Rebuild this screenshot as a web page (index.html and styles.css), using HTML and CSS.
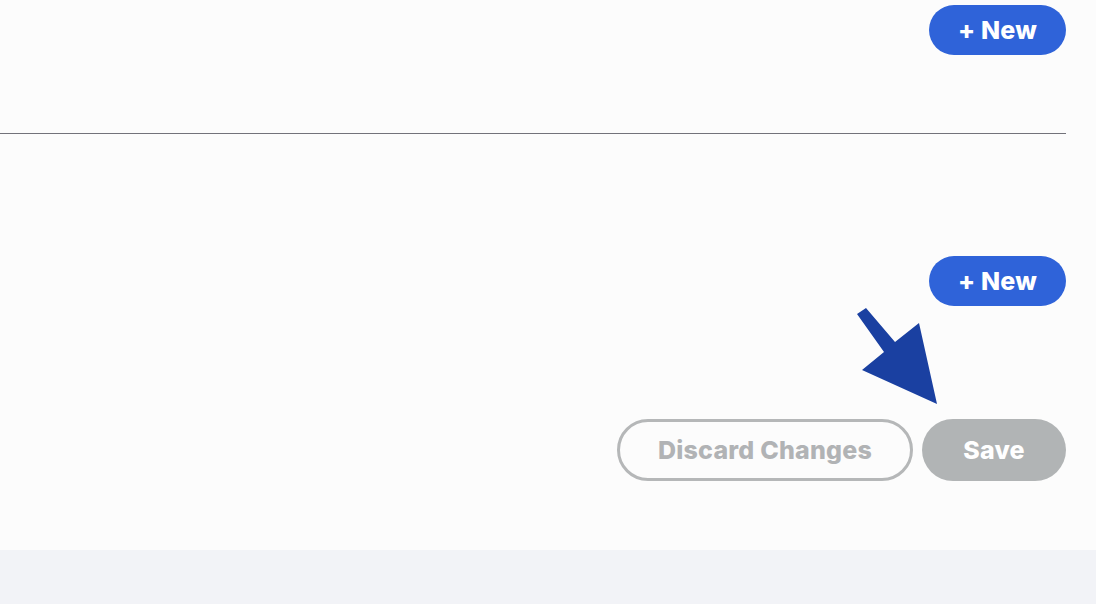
FILE: index.html
```html
<!DOCTYPE html>
<html>
<head>
<meta charset="utf-8">
<link rel="stylesheet" href="styles.css">
</head>
<body>
<div class="page">
  <main class="main">
    <section class="section section-top">
      <button class="btn btn-new">+ New</button>
    </section>
    <hr class="divider">
    <section class="section section-second">
      <button class="btn btn-new">+ New</button>
    </section>
    <div class="actions">
      <button class="btn btn-discard">Discard Changes</button>
      <button class="btn btn-save">Save</button>
    </div>
    <svg class="arrow" width="1096" height="604" viewBox="0 0 1096 604">
      <polygon points="866,308 895,342 919,323 937,404 862,370 884,352 857,314" fill="#1a40a1"/>
    </svg>
  </main>
  <footer class="footer"></footer>
</div>
</body>
</html>
```

FILE: styles.css
```css
html, body {
  margin: 0;
  padding: 0;
}
body {
  background: #f2f3f7;
  font-family: Inter, "Liberation Sans", sans-serif;
  width: 1096px;
  height: 604px;
  overflow: hidden;
}
.page {
  display: flex;
  flex-direction: column;
  height: 604px;
}
.main {
  position: relative;
  height: 550px;
  background: #fcfcfc;
  padding-right: 30px;
  box-sizing: border-box;
  display: flex;
  flex-direction: column;
}
.section {
  display: flex;
  justify-content: flex-end;
  align-items: flex-start;
}
.section-top {
  height: 133px;
  padding-top: 5px;
  box-sizing: border-box;
}
.divider {
  margin: 0;
  border: 0;
  height: 1px;
  background: #72727a;
}
.section-second {
  padding-top: 122px;
}
.btn {
  font-family: Inter, "Liberation Sans", sans-serif;
  font-weight: 800;
  font-size: 25px;
  letter-spacing: 0.2px;
  border-radius: 999px;
  cursor: pointer;
  box-sizing: border-box;
  display: flex;
  align-items: center;
  justify-content: center;
  padding: 0;
}
.btn-new {
  width: 137px;
  height: 50px;
  background: #2f63d9;
  color: #ffffff;
  border: 0;
}
.actions {
  display: flex;
  justify-content: flex-end;
  gap: 9px;
  margin-top: 113px;
}
.btn-discard {
  width: 296px;
  height: 62px;
  background: transparent;
  border: 3px solid #b5b7b8;
  color: #b1b3b5;
}
.btn-save {
  width: 144px;
  height: 62px;
  background: #b1b4b5;
  border: 0;
  color: #ffffff;
}
.arrow {
  position: absolute;
  left: 0;
  top: 0;
  pointer-events: none;
}
.footer {
  flex: 1;
  background: #f2f3f7;
}
```
